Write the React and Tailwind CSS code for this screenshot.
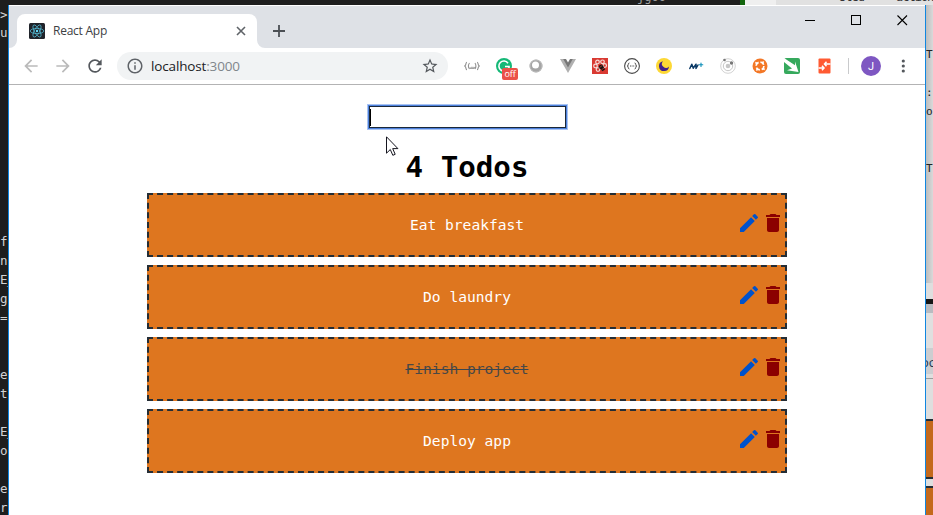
import React from "react";
import { MdEdit, MdDelete, MdStarBorder, MdRefresh, MdArrowBack, MdArrowForward, MdInfoOutline } from "react-icons/md";

const todos = [
  { text: "Eat breakfast" },
  { text: "Do laundry" },
  { text: "Finish project", done: true },
  { text: "Deploy app" },
];

const codeLeft = [
  [">", 5], ["u", 23], ["f", 232], ["n", 251], ["E_", 270], ["g", 289], ["=", 308],
  ["e", 365], ["t", 384], ["E_", 422], ["o", 441], ["e", 479], ["r", 498],
];

const codeRight = [["T", 45], [":", 83], ["o", 102], ["T", 159]];

function ReactLogo() {
  return (
    <svg className="h-4 w-4" viewBox="0 0 16 16" fill="none" stroke="#53b9d3" strokeWidth=".75">
      <rect width="16" height="16" rx="1.5" fill="#20232a" stroke="none" />
      <ellipse cx="8" cy="8" rx="6.8" ry="2.6" />
      <ellipse cx="8" cy="8" rx="6.8" ry="2.6" transform="rotate(60 8 8)" />
      <ellipse cx="8" cy="8" rx="6.8" ry="2.6" transform="rotate(120 8 8)" />
      <circle cx="8" cy="8" r="1.2" fill="#61dafb" stroke="none" />
    </svg>
  );
}

function TabStrip() {
  return (
    <div className="flex h-[42px] shrink-0 items-end bg-[#dee1e6]">
      <svg className="h-2 w-2" viewBox="0 0 8 8"><path d="M8 0v8H0a8 8 0 0 0 8-8z" fill="#fff" /></svg>
      <div className="flex h-[34px] w-[240px] items-center rounded-t-lg bg-white pl-3 pr-[11px]">
        <ReactLogo />
        <span className="ml-2 flex-1 whitespace-nowrap font-['Open_Sans',sans-serif] text-[12px] leading-4 tracking-[-0.25px] text-[#3c4043]">React App</span>
        <svg className="h-[10px] w-[10px]" viewBox="0 0 10 10" stroke="#5f6368" strokeWidth="1.6"><path d="M1 1l8 8M9 1l-8 8" /></svg>
      </div>
      <svg className="h-2 w-2" viewBox="0 0 8 8"><path d="M0 0v8h8a8 8 0 0 1-8-8z" fill="#fff" /></svg>
      <svg className="mb-[11px] ml-2 h-3 w-3" viewBox="0 0 12 12" stroke="#4b4f54" strokeWidth="1.8"><path d="M6 0v12M0 6h12" /></svg>
      <svg className="mb-[22px] ml-auto mr-4 h-[12px] w-[104px]" viewBox="0 0 104 12" fill="none" stroke="#000">
        <path d="M0 6.5h10" />
        <rect x="46.5" y="1.5" width="9" height="9" />
        <path d="M92.5 1.5l9.500 9.500M102 1.500l-9.500 9.500" strokeWidth="1.1" />
      </svg>
    </div>
  );
}

function Extensions() {
  return (
    <div className="ml-4 flex items-center gap-4">
      <svg className="h-4 w-4" viewBox="0 0 16 16" fill="none" stroke="#919191" strokeWidth="1.100">
        <path d="M3 4.200C1.500 4.200 2.500 7 .8 8c1.700 1 .7 3.800 2.200 3.800M5.500 5c-1.500 2-1.500 4 0 6M6 9.500q1 2 2 0q1 2 2 0q1 1.500 2-1M11 5c1.200 2 1.200 4 0 6M13 4.200c1.500 0 .5 2.800 2.200 3.800c-1.700 1-.7 3.800-2.200 3.800" />
      </svg>
      <div className="relative h-4 w-4">
        <svg className="h-4 w-4" viewBox="0 0 16 16" fill="none">
          <circle cx="8" cy="8" r="8" fill="#15b877" />
          <path d="M12 5.200A5 5 0 1 0 12.500 10M9 8.500h4V11" stroke="#fff" strokeWidth="1.600" />
        </svg>
        <span className="absolute left-[6px] top-[10px] flex h-3 w-4 items-center justify-center rounded-[2px] bg-[#eb5148] font-['Open_Sans',sans-serif] text-[9px] leading-3 tracking-[-0.1px] text-white">off</span>
      </div>
      <svg className="h-4 w-4" viewBox="0 0 16 16">
        <circle cx="8" cy="8" r="6.500" fill="#a5a5a5" />
        <circle cx="8" cy="8" r="6" fill="none" stroke="#c2c2c2" strokeWidth=".8" />
        <circle cx="7.500" cy="7" r="3.500" fill="#fff" />
      </svg>
      <svg className="h-4 w-4" viewBox="0 0 16 16">
        <path d="M0 1h5l3 5 3-5h5L8 15z" fill="#b0b0b0" />
        <path d="M3.200 1H6l2 3.500L10 1h2.800L8 9.500z" fill="#777" />
      </svg>
      <svg className="h-4 w-4" viewBox="0 0 16 16">
        <rect width="16" height="16" fill="#d93a32" />
        <g fill="none" stroke="#f6dcd8" strokeWidth="1.200">
          <circle cx="5.500" cy="4" r="1.800" /><circle cx="10.500" cy="3.800" r="1.800" /><circle cx="3.500" cy="8" r="1.800" /><circle cx="12.700" cy="7.500" r="1.800" /><circle cx="6" cy="11.500" r="1.800" />
        </g>
        <path d="M7.500 7l2.500-.5 1.500 2 1.500 3-2.500 1.800-2-2.300-2-1z" fill="#161313" />
        <path d="M7.500 9.500l2.500-1.800M9.500 11.800l2.500-1.800" stroke="#df4b38" strokeWidth=".7" />
      </svg>
      <svg className="h-4 w-4" viewBox="0 0 16 16" fill="none" stroke="#4a4a4a">
        <circle cx="8" cy="8" r="7.400" strokeWidth="1.100" />
        <path d="M5.400 5Q4.200 5 4.200 6.600T3.200 8q1 0 1 1.400T5.400 11M10.600 5q1.200 0 1.200 1.600T12.800 8q-1 0-1 1.400T10.600 11" />
        <path d="M6 8h4.200" strokeDasharray="1 .6" />
      </svg>
      <svg className="h-4 w-4" viewBox="0 0 16 16">
        <circle cx="8" cy="8" r="8" fill="#fdd835" />
        <path d="M7 3.200A5 5 0 1 0 13 8.500 4 4 0 0 1 7 3.200z" fill="#41208c" />
      </svg>
      <svg className="h-4 w-4" viewBox="0 0 16 16" fill="none" stroke="#0b3a66" strokeLinecap="round" strokeLinejoin="round">
        <path d="M1.800 10.500L3.800 6.200l1.500 4L8 6.200v4.300l2-3.500" strokeWidth="1.500" />
        <path d="M13 5v3.500M11.300 6.700h3.500" stroke="#0b8eb8" strokeWidth="1.100" />
      </svg>
      <svg className="h-4 w-4" viewBox="0 0 16 16" fill="none" stroke="#c6c6c6">
        <circle cx="8" cy="8" r="7.300" strokeWidth=".8" />
        <circle cx="8" cy="8" r="4.700" />
        <circle cx="8" cy="8" r="2.300" fill="#c6c6c6" stroke="none" />
        <circle cx="4.500" cy="2" r="1.300" fill="#777" stroke="none" />
        <circle cx="11.500" cy="5" r="1.700" fill="#777" stroke="none" />
      </svg>
      <svg className="h-4 w-4" viewBox="0 0 16 16" fill="none">
        <circle cx="8" cy="8" r="7.500" fill="#f37726" />
        <circle cx="8" cy="8" r="3.900" stroke="#fff" strokeWidth="1.700" strokeDasharray="4.200 1.926" />
        <path d="M3.300 4.500l2 1M11.500 3.300l-1 2M12.700 11.500l-2-1M4.500 12.700l1-2" stroke="#fff" strokeWidth="1.500" />
      </svg>
      <svg className="h-4 w-4" viewBox="0 0 16 16">
        <rect width="16" height="16" rx="2" fill="#36a95d" />
        <path d="M0 0L11 7.200V3.500l3.500 10.500L3 12.200l5-1.700L0 4z" fill="#fff" />
      </svg>
      <svg className="h-4 w-4" viewBox="0 0 16 16">
        <rect x="2.500" y=".5" width="12" height="15" rx="1" fill="#ff5a32" />
        <path d="M14.500 6H9M10.500 3.800L8.500 6l2 2.200M2.500 10h5M6 7.800L8 10l-2 2.200" fill="none" stroke="#fff" strokeWidth="1.500" />
      </svg>
    </div>
  );
}

function Toolbar() {
  return (
    <div className="flex h-[37px] shrink-0 items-center border-b border-[#b3b3b4] bg-white">
      <MdArrowBack className="ml-3 h-5 w-5 text-[#bababa]" />
      <MdArrowForward className="ml-3 h-5 w-5 text-[#bababa]" />
      <MdRefresh className="ml-3 h-5 w-5 text-[#54585d]" />
      <div className="ml-3 flex h-7 w-[331px] items-center rounded-full bg-[#f1f3f4] pl-[9px] pr-[9px]">
        <MdInfoOutline className="h-[18px] w-[18px] text-[#5f6368]" />
        <span className="ml-[7px] flex-1 whitespace-nowrap font-['Open_Sans',sans-serif] text-[13.5px] leading-5 tracking-[-0.15px] text-[#202124]">
          localhost<span className="text-[#80868b]">:3000</span>
        </span>
        <MdStarBorder className="h-[18px] w-[18px] text-[#54585d]" />
      </div>
      <Extensions />
      <div className="ml-4 h-4 w-px bg-[#c9cacc]" />
      <div className="ml-3 flex h-5 w-5 items-center justify-center rounded-full bg-[#7e57c2] font-['Roboto',sans-serif] text-[11px] leading-none text-white">J</div>
      <svg className="ml-5 h-[14px] w-1" viewBox="0 0 4 14" fill="#54585d">
        <circle cx="2.300" cy="2" r="1.600" /><circle cx="2.300" cy="7" r="1.600" /><circle cx="2.300" cy="12" r="1.600" />
      </svg>
    </div>
  );
}

function TodoRow({ text, done }) {
  return (
    <li className="flex h-16 items-center border-2 border-dashed border-[#242d35] bg-[#de761f]">
      <span className="w-[46px]" />
      <span className={done
        ? "flex-1 text-center text-[#4a4845] line-through decoration-[#3a4650]"
        : "flex-1 text-center text-white"}>{text}</span>
      <span className="flex w-[46px] gap-1 pb-1">
        <MdEdit className="-ml-[2px] h-6 w-6 shrink-0 text-[#0052cc]" />
        <MdDelete className="-ml-[4px] h-6 w-6 shrink-0 text-[#8b0000]" />
      </span>
    </li>
  );
}

function Page() {
  return (
    <main className="flex flex-1 flex-col items-center bg-white font-['DejaVu_Sans_Mono',monospace] text-[14.6px]">
      <div className="ml-px mt-[21px] flex h-[22px] w-[197px] items-center border border-[#1b2838] bg-white shadow-[0_0_0_1px_#4c80dc,0_0_0_2px_#a9c4f3]">
        <span className="h-[17px] w-px bg-black" />
      </div>
      <h1 className="mt-[19px] h-[40px] text-[29.2px] font-bold leading-[40px] text-black">4 Todos</h1>
      <ul className="mt-[6px] flex w-[640px] flex-col gap-2">
        {todos.map((t) => <TodoRow key={t.text} {...t} />)}
      </ul>
    </main>
  );
}

function Desktop() {
  return (
    <>
      <div className="absolute left-0 top-0 h-[5px] w-[740px] overflow-hidden bg-[#1e1e1e] font-['DejaVu_Sans_Mono',monospace]">
        <span className="absolute -top-[10px] left-[637px] text-[12px] leading-[15px] text-[#a0a0a0]">ɟgoo</span>
      </div>
      <div className="absolute left-[740px] top-0 h-[5px] w-[5px] bg-[#13650e]" />
      <div className="absolute left-[745px] top-0 h-[5px] w-[188px] overflow-hidden bg-[#e1e1e1] font-['DejaVu_Sans_Mono',monospace] text-[12px] leading-[15px] text-[#333]">
        <div className="h-full w-[31px] bg-[#efefef]" />
        <span className="absolute -top-[10px] left-[94px] tracking-[-1px]">sted</span>
        <span className="absolute -top-[10px] left-[151px] tracking-[-1px]">actions</span>
      </div>
      <div className="absolute bottom-0 left-0 top-[5px] w-2 overflow-hidden bg-[#1e1e1e] font-['DejaVu_Sans_Mono',monospace] text-[12.500px] leading-[19px] tracking-[-0.5px] text-[#d4d4d4]">
        {codeLeft.map(([c, y]) => <span key={y} className="absolute left-0" style={{ top: y - 5 }}>{c}</span>)}
      </div>
      <div className="absolute bottom-0 left-[926px] top-[5px] flex w-[7px] flex-col bg-gradient-to-r from-[#bdbdbd] to-[#d9d9d9]">
        <div className="h-[278px]" />
        <div className="h-4 bg-[#dedede]" />
        <div className="h-[5px] bg-[#161616]" />
        <div className="h-[9px] bg-[#b9bbc0]" />
        <div className="h-[35px] bg-[#dfdfdf]" />
        <div className="h-[26px] bg-[#cccdd0]" />
        <div className="h-[4px] bg-[#dfdfdf]" />
        <div className="h-px bg-[#9b9b9b]" />
        <div className="h-[40px] bg-[#dedede]" />
        <div className="h-[60px] border-y-2 border-dashed border-[#242d35] bg-[#c4691c]" />
        <div className="h-[7px] bg-[#dedede]" />
        <div className="flex-1 border-t-2 border-dashed border-[#242d35] bg-[#c4691c]" />
        {codeRight.map(([c, y]) => (
          <span key={y} className="absolute left-0 font-['DejaVu_Sans_Mono',monospace] text-[11px] leading-[19px] text-[#222]" style={{ top: y - 5 }}>{c}</span>
        ))}
        <span className="absolute left-0 top-[347px] w-[7px] overflow-hidden whitespace-nowrap font-['Open_Sans',sans-serif] text-[13px] leading-5 text-[#25384f]"><span className="-ml-[5px]">oc</span></span>
      </div>
    </>
  );
}

function Cursor() {
  return (
    <svg className="absolute left-[386px] top-[136px] h-[21px] w-[13px]" viewBox="0 0 13 21">
      <path d="M.5.8v16.400l3.800-3.700 2.500 5.800 2.400-1-2.500-5.700h5.200z" fill="#fff" stroke="#15151f" />
    </svg>
  );
}

export default function App() {
  return (
    <div className="relative h-[515px] w-[933px] overflow-hidden bg-[#1e1e1e]">
      <Desktop />
      <div className="absolute bottom-0 left-[8px] top-[5px] flex w-[918px] flex-col border-x border-[#0f86e0] bg-white">
        <div className="h-px shrink-0 bg-white" />
        <TabStrip />
        <Toolbar />
        <Page />
      </div>
      <Cursor />
    </div>
  );
}
